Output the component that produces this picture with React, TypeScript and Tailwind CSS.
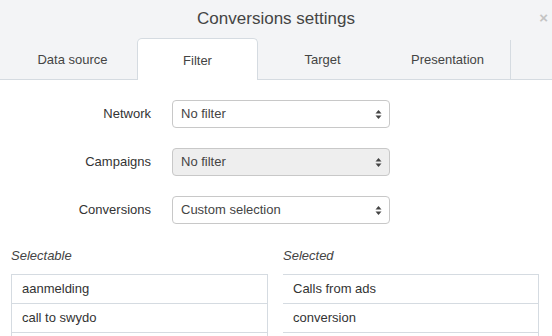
import React from "react";

const tabs = ["Data source", "Filter", "Target", "Presentation"];

const filters = [
  { label: "Network", value: "No filter", disabled: false },
  { label: "Campaigns", value: "No filter", disabled: true },
  { label: "Conversions", value: "Custom selection", disabled: false },
];

// third rows run past the bottom edge of the dialog
const selectable = ["aanmelding", "call to swydo", ""];
const selected = ["Calls from ads", "conversion", ""];

function SortArrows() {
  return (
    <svg width="7" height="11" viewBox="0 0 7 11" className="shrink-0">
      <path d="M3.5 1 L6.5 4.5 L0.5 4.5 Z" fill="#444" />
      <path d="M3.5 10 L6.5 6.5 L0.5 6.5 Z" fill="#444" />
    </svg>
  );
}

function FakeSelect({ value, disabled }: { value: string; disabled: boolean }) {
  return (
    <div
      className={`flex h-[28px] w-[218px] items-center justify-between rounded-[4px] border border-[#c8c8c8] pl-[8px] pr-[7px] text-[13px] text-[#444] ${
        disabled ? "bg-[#eeeeee]" : "bg-white"
      }`}
    >
      <span>{value}</span>
      <SortArrows />
    </div>
  );
}

function ItemList({
  items,
  noLeftBorder,
}: {
  items: string[];
  noLeftBorder?: boolean;
}) {
  return (
    <div
      className={`border-r border-t border-[#d5dbe1] ${
        noLeftBorder ? "" : "border-l"
      }`}
    >
      {items.map((item, i) => (
        <div
          key={i}
          className="flex h-[29px] items-center border-b border-[#d5dbe1] pl-[10px] text-[13px] text-[#333]"
        >
          {item}
        </div>
      ))}
    </div>
  );
}

export default function App() {
  const active = "Filter";

  return (
    <div className="h-[336px] w-[552px] overflow-hidden bg-white font-['Liberation_Sans',Arial,sans-serif]">
      <div className="bg-[#f3f4f6]">
        <div className="relative flex h-[38px] items-center justify-center">
          <span className="text-[17px] text-[#444]">Conversions settings</span>
          <span className="absolute right-[4px] top-[10px] text-[15px] font-bold leading-none text-[#c4c4c4]">
            ×
          </span>
        </div>
        <div className="flex h-[42px] border-b border-[#d5dbe1] pl-[10px]">
          {tabs.map((tab) => (
            <div key={tab} className="flex w-[125px]">
              {tab === active ? (
                <div className="relative z-10 -mb-px mx-[2px] flex flex-1 items-center justify-center rounded-t-[5px] border border-b-0 border-[#d5dbe1] bg-white pt-[2px] text-[13px] text-[#444]">
                  {tab}
                </div>
              ) : (
                <div className="flex flex-1 items-center justify-center pt-[2px] text-[13px] text-[#444]">
                  {tab}
                </div>
              )}
            </div>
          ))}
          <div className="mt-[2px] w-px bg-[#d5dbe1]" />
        </div>
      </div>

      <div className="flex flex-col gap-[20px] pt-[20px]">
        {filters.map((f) => (
          <div key={f.label} className="flex items-center">
            <div className="w-[151px] text-right text-[13px] text-[#333]">
              {f.label}
            </div>
            <div className="ml-[21px]">
              <FakeSelect value={f.value} disabled={f.disabled} />
            </div>
          </div>
        ))}
      </div>

      <div className="mt-[23px] grid grid-cols-[257px_256px] gap-x-[15px] pl-[11px]">
        <div>
          <div className="mb-[9px] h-[18px] text-[13px] italic leading-[18px] text-[#444]">
            Selectable
          </div>
          <ItemList items={selectable} />
        </div>
        <div>
          <div className="mb-[9px] h-[18px] text-[13px] italic leading-[18px] text-[#444]">
            Selected
          </div>
          <ItemList items={selected} noLeftBorder />
        </div>
      </div>
    </div>
  );
}
